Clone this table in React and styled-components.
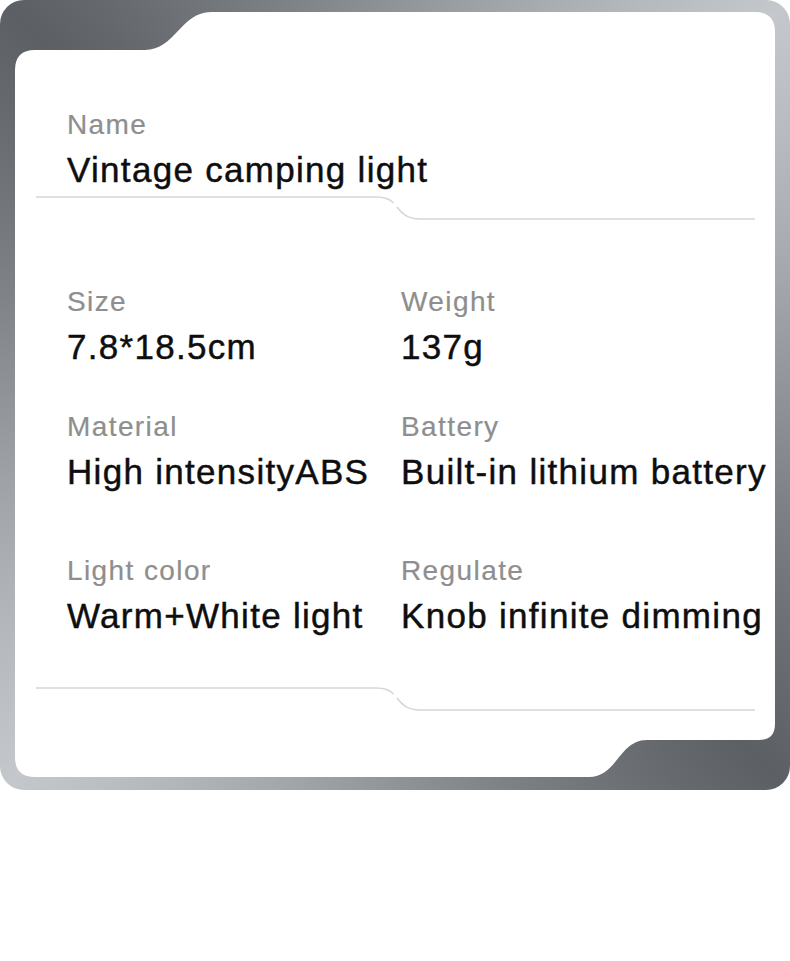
import React from 'react';
import styled, { createGlobalStyle } from 'styled-components';

const GlobalStyle = createGlobalStyle`
  html, body {
    margin: 0;
    padding: 0;
    background: #ffffff;
  }
  body {
    font-family: "Liberation Sans", Arial, sans-serif;
  }
`;

const Page = styled.div`
  width: 790px;
  height: 961px;
  background: #ffffff;
`;

const Frame = styled.div`
  width: 790px;
  height: 790px;
  box-sizing: border-box;
  padding: 12px 15px 13px 15px;
  border-radius: 24px;
  background: conic-gradient(
    from -45deg at 50% 50%,
    #5c6065 0deg,
    #c4c8cc 90deg,
    #5c6065 180deg,
    #c4c8cc 270deg,
    #5c6065 360deg
  );
`;

const Card = styled.div`
  width: 760px;
  height: 765px;
  box-sizing: border-box;
  padding: 98px 0 0 21px;
  background: #ffffff;
  clip-path: path('M 20 38 L 130 38 C 160 38 166 0 196 0 L 740 0 Q 760 0 760 20 L 760 712 Q 760 728 744 728 L 632 728 C 604 728 602 765 574 765 L 20 765 Q 0 765 0 745 L 0 58 Q 0 38 20 38 Z');
`;

const Block = styled.div`
  padding-left: 31px;
`;

const Label = styled.div`
  font-size: 28px;
  line-height: 30px;
  letter-spacing: 1.4px;
  color: #8e8e8e;
  -webkit-text-stroke: 0.2px #8e8e8e;
`;

const Value = styled.div`
  margin-top: 10px;
  font-size: 35px;
  line-height: 40px;
  letter-spacing: 1.3px;
  color: #0e0e0e;
  -webkit-text-stroke: 0.45px #0e0e0e;
  white-space: nowrap;
`;

const DividerSvg = styled.svg`
  display: block;
  width: 719px;
  height: 26px;
  margin-top: ${p => p.$top}px;
`;

const Grid = styled.div`
  margin-top: 66px;
  padding-left: 31px;
  display: grid;
  grid-template-columns: 334px 340px;
  grid-template-rows: 125px 144px auto;
`;

const Divider = ({ top }) => (
  <DividerSvg $top={top} viewBox="0 0 719 26">
    <path d="M0 2 H340 C349 2 354 4 357.5 8" fill="none" stroke="#d6d6d6" strokeWidth="1.6" />
    <path d="M361 12 C366 19 372 24 384 24 H719" fill="none" stroke="#d6d6d6" strokeWidth="1.6" />
  </DividerSvg>
);

const specs = [
  ['Size', '7.8*18.5cm'],
  ['Weight', '137g'],
  ['Material', 'High intensityABS'],
  ['Battery', 'Built-in lithium battery'],
  ['Light color', 'Warm+White light'],
  ['Regulate', 'Knob infinite dimming'],
];

const App = () => (
  <Page>
    <GlobalStyle />
    <Frame>
      <Card>
        <Block>
          <Label>Name</Label>
          <Value>Vintage camping light</Value>
        </Block>
        <Divider top={5} />
        <Grid>
          {specs.map(([label, value]) => (
            <div key={label}>
              <Label>{label}</Label>
              <Value>{value}</Value>
            </div>
          ))}
        </Grid>
        <Divider top={50} />
      </Card>
    </Frame>
  </Page>
);

export default App;
